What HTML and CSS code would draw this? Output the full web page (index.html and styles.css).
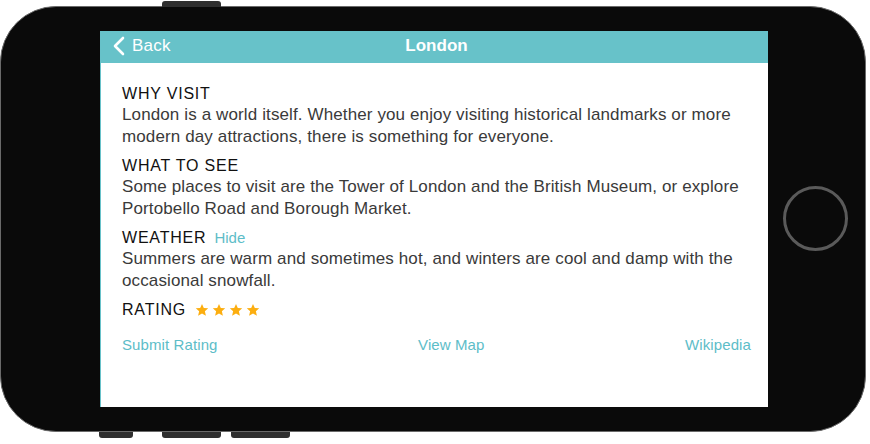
FILE: index.html
```html
<!DOCTYPE html>
<html>
<head>
<meta charset="utf-8">
<link rel="stylesheet" href="styles.css">
</head>
<body>
<div class="phone">
  <span class="hw hw-top"></span>
  <span class="hw hw-b1"></span>
  <span class="hw hw-b2"></span>
  <span class="hw hw-b3"></span>
  <div class="screen">
    <div class="nav">
      <div class="back">
        <svg width="14" height="20" viewBox="0 0 14 20"><path d="M11 2 L3 10 L11 18" fill="none" stroke="#fff" stroke-width="2.6" stroke-linecap="round" stroke-linejoin="round"/></svg>
        <span>Back</span>
      </div>
      <div class="title">London</div>
    </div>
    <div class="content">
      <section class="sec">
        <h2>WHY VISIT</h2>
        <p>London is a world itself. Whether you enjoy visiting historical landmarks or more modern day attractions, there is something for everyone.</p>
      </section>
      <section class="sec">
        <h2>WHAT TO SEE</h2>
        <p>Some places to visit are the Tower of London and the British Museum, or explore Portobello Road and Borough Market.</p>
      </section>
      <section class="sec">
        <h2>WEATHER <a class="hide">Hide</a></h2>
        <p>Summers are warm and sometimes hot, and winters are cool and damp with the occasional snowfall.</p>
      </section>
      <section class="sec">
        <h2>RATING <span class="stars">
          <svg viewBox="0 0 24 24"><path d="M12 1.5l3.1 7.1 7.6.6-5.8 5 1.8 7.5L12 17.8l-6.7 3.9 1.8-7.5-5.8-5 7.6-.6z"/></svg>
          <svg viewBox="0 0 24 24"><path d="M12 1.5l3.1 7.1 7.6.6-5.8 5 1.8 7.5L12 17.8l-6.7 3.9 1.8-7.5-5.8-5 7.6-.6z"/></svg>
          <svg viewBox="0 0 24 24"><path d="M12 1.5l3.1 7.1 7.6.6-5.8 5 1.8 7.5L12 17.8l-6.7 3.9 1.8-7.5-5.8-5 7.6-.6z"/></svg>
          <svg viewBox="0 0 24 24"><path d="M12 1.5l3.1 7.1 7.6.6-5.8 5 1.8 7.5L12 17.8l-6.7 3.9 1.8-7.5-5.8-5 7.6-.6z"/></svg>
        </span></h2>
      </section>
      <div class="links">
        <a>Submit Rating</a>
        <a>View Map</a>
        <a>Wikipedia</a>
      </div>
    </div>
  </div>
  <div class="home"></div>
</div>
</body>
</html>
```
FILE: styles.css
```css
html, body {
  margin: 0;
  padding: 0;
  background: #fff;
}
body {
  width: 870px;
  height: 444px;
  overflow: hidden;
  padding-top: 6px;
  box-sizing: border-box;
  font-family: "Liberation Sans", Arial, sans-serif;
}
.phone {
  position: relative;
  width: 866px;
  height: 426px;
  box-sizing: border-box;
  background: #0a0a0a;
  border: 1px solid #6a6a6a;
  border-radius: 56px;
  display: flex;
  align-items: center;
  padding-left: 99px;
}
.hw {
  position: absolute;
  background: #2f2f2f;
  height: 6px;
}
.hw-top { left: 161px; top: -6px; width: 59px; border-radius: 3px 3px 0 0; }
.hw-b1 { left: 98px; bottom: -7px; width: 34px; border-radius: 0 0 3px 3px; }
.hw-b2 { left: 161px; bottom: -7px; width: 59px; border-radius: 0 0 3px 3px; }
.hw-b3 { left: 230px; bottom: -7px; width: 59px; border-radius: 0 0 3px 3px; }
.screen {
  width: 668px;
  height: 376px;
  background: #fff;
  border-left: 1px solid #67c1c9;
  box-sizing: border-box;
  display: flex;
  flex-direction: column;
}
.nav {
  height: 32px;
  background: #67c2c9;
  position: relative;
  display: flex;
  align-items: center;
  justify-content: center;
  color: #fff;
  font-size: 17px;
}
.back {
  position: absolute;
  left: 11px;
  top: 0;
  height: 32px;
  display: flex;
  align-items: center;
  gap: 6px;
  letter-spacing: 0.2px;
}
.back svg { display: block; margin-top: -3px; }
.back span { margin-top: -2px; }
.title {
  font-weight: bold;
  margin-left: 4px;
  margin-top: -3px;
}
.content {
  padding: 21px 17px 0 21px;
}
.sec { margin-bottom: 9px; }
.sec h2 {
  margin: 0;
  font-size: 16px;
  font-weight: normal;
  letter-spacing: 0.8px;
  color: #111;
  line-height: 20px;
  display: flex;
  align-items: center;
}
.sec p {
  margin: 0;
  font-size: 17px;
  line-height: 21.5px;
  letter-spacing: 0.12px;
  color: #3a3a3a;
}
.hide {
  color: #5dbdc8;
  font-size: 15px;
  letter-spacing: 0;
  margin-left: 8px;
}
.stars {
  display: flex;
  gap: 3px;
  margin-left: 9px;
}
.stars svg {
  width: 14px;
  height: 14px;
  fill: #fcae10;
}
.links {
  display: flex;
  justify-content: space-between;
  margin-top: 16px;
  line-height: 18px;
  font-size: 15px;
  letter-spacing: 0.1px;
  color: #5dbdc8;
}
.home {
  width: 59px;
  height: 59px;
  border: 3px solid #5a5a5a;
  border-radius: 50%;
  margin-left: 15px;
  margin-top: -1px;
}
```
